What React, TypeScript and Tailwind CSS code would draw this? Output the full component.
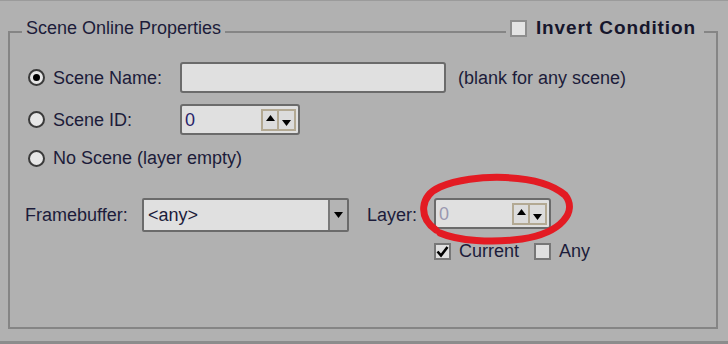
import React from "react";

const txt = "text-[#1c1c3a]";

function Radio({ checked }: { checked?: boolean }) {
  return (
    <div className="w-[17px] h-[17px] rounded-full border-[2px] border-[#3a3a3a] bg-[#e6e6e6] flex items-center justify-center shrink-0">
      {checked && <div className="w-[7px] h-[7px] rounded-full bg-black" />}
    </div>
  );
}

function Check({ checked, light }: { checked?: boolean; light?: boolean }) {
  return (
    <div
      className={
        "w-[17px] h-[17px] border-[2px] flex items-center justify-center shrink-0 " +
        (light ? "border-[#8e8e8e] bg-[#e4e4e4]" : "border-[#777777] bg-[#e0e0e0]")
      }
    >
      {checked && (
        <svg width="13" height="13" viewBox="0 0 13 13">
          <path d="M1.5 6.5 L5 10.5 L11.5 2" fill="none" stroke="black" strokeWidth="2.6" />
        </svg>
      )}
    </div>
  );
}

function SpinBtns() {
  return (
    <div className="flex">
      <div className="w-[18px] h-[22px] border-[2px] border-[#b3a993] bg-[#dcdcdc] flex justify-center pt-[4px]">
        <svg width="9" height="6" viewBox="0 0 9 6">
          <path d="M0 6 L4.5 0 L9 6 Z" fill="black" />
        </svg>
      </div>
      <div className="w-[17px] h-[22px] border-[2px] border-l-0 border-[#b3a993] bg-[#dcdcdc] flex justify-center pt-[9px]">
        <svg width="9" height="6" viewBox="0 0 9 6">
          <path d="M0 0 L9 0 L4.5 6 Z" fill="black" />
        </svg>
      </div>
    </div>
  );
}

function Spin({ w, value, disabled }: { w: string; value: string; disabled?: boolean }) {
  return (
    <div
      className={
        w +
        " h-[31px] border-[2px] border-[#6b6b6b] rounded-[3px] bg-[#e0e0e0] flex items-center justify-between pl-[3px] pr-[2px]"
      }
    >
      <span className={disabled ? "text-[#9a98b0]" : "text-[#2a1f6a]"}>{value}</span>
      <SpinBtns />
    </div>
  );
}

export default function App() {
  return (
    <div
      className="w-[728px] h-[344px] bg-[#b1b1b1] border-t border-[#9b9b9b] border-b-[3px] border-b-[#8c8c8c] overflow-hidden relative text-[18px] leading-[24px]"
      style={{ fontFamily: '"Liberation Sans", Arial, sans-serif' }}
    >
      <div className="ml-[8px] mt-[30px] w-[710px] h-[298px] border-[2px] border-[#858585]">
        {/* title row */}
        <div className="-mt-[17px] flex items-center justify-between h-[24px]">
          <div className={"ml-[12px] px-[4px] bg-[#b1b1b1] " + txt}>Scene Online Properties</div>
          <div className="mr-[12px] pl-[4px] pr-[8px] bg-[#b1b1b1] flex items-center gap-[9px]">
            <Check light />
            <span className="font-bold text-[#16162c] text-[19px] tracking-[0.9px]">Invert Condition</span>
          </div>
        </div>

        {/* Row 1 */}
        <div className="mt-[22px] pl-[18px] flex items-center">
          <Radio checked />
          <div className={"ml-[8px] w-[127px] " + txt}>Scene Name:</div>
          <div className="w-[266px] h-[31px] border-[2px] border-[#6b6b6b] rounded-[3px] bg-[#e0e0e0]" />
          <div className={"ml-[12px] " + txt}>(blank for any scene)</div>
        </div>

        {/* Row 2 */}
        <div className="mt-[11px] pl-[18px] flex items-center">
          <Radio />
          <div className={"ml-[8px] w-[127px] " + txt}>Scene ID:</div>
          <Spin w="w-[120px]" value="0" />
        </div>

        {/* Row 3 */}
        <div className="mt-[11px] pl-[18px] flex items-center">
          <Radio />
          <div className={"ml-[8px] " + txt}>No Scene (layer empty)</div>
        </div>

        {/* Framebuffer row */}
        <div className="mt-[28px] pl-[15px] flex items-start">
          <div className={"w-[117px] h-[34px] flex items-center " + txt}>Framebuffer:</div>
          <div className="w-[207px] h-[34px] border-[2px] border-[#6b6b6b] rounded-[2px] flex">
            <div className="flex-1 bg-[#e0e0e0] pl-[4px] flex items-center text-[#1c1c3a]">&lt;any&gt;</div>
            <div className="w-[19px] border-l-[2px] border-[#7a7a7a] bg-[#b4b4b4] flex items-center justify-center">
              <svg width="9" height="6" viewBox="0 0 9 6">
                <path d="M0 0 L9 0 L4.5 6 Z" fill="black" />
              </svg>
            </div>
          </div>
          <div className={"ml-[18px] w-[67px] h-[34px] flex items-center " + txt}>Layer:</div>
          <div className="flex flex-col">
            <Spin w="w-[117px]" value="0" disabled />
            <div className="mt-[10px] flex items-center">
              <Check checked />
              <span className={"ml-[8px] " + txt}>Current</span>
              <div className="ml-[15px]">
                <Check />
              </div>
              <span className={"ml-[8px] " + txt}>Any</span>
            </div>
          </div>
        </div>
      </div>

      {/* red hand-drawn annotation */}
      <svg className="absolute left-0 top-0 pointer-events-none" width="728" height="344" viewBox="0 0 728 344">
        <path
          d="M436 229 C 418 216, 420 195, 440 186 C 472 172, 540 172, 565 194 C 578 210, 562 232, 522 238 C 492 242, 458 240, 440 232"
          fill="none"
          stroke="#e31b23"
          strokeWidth="7"
          strokeLinecap="round"
        />
      </svg>
    </div>
  );
}
